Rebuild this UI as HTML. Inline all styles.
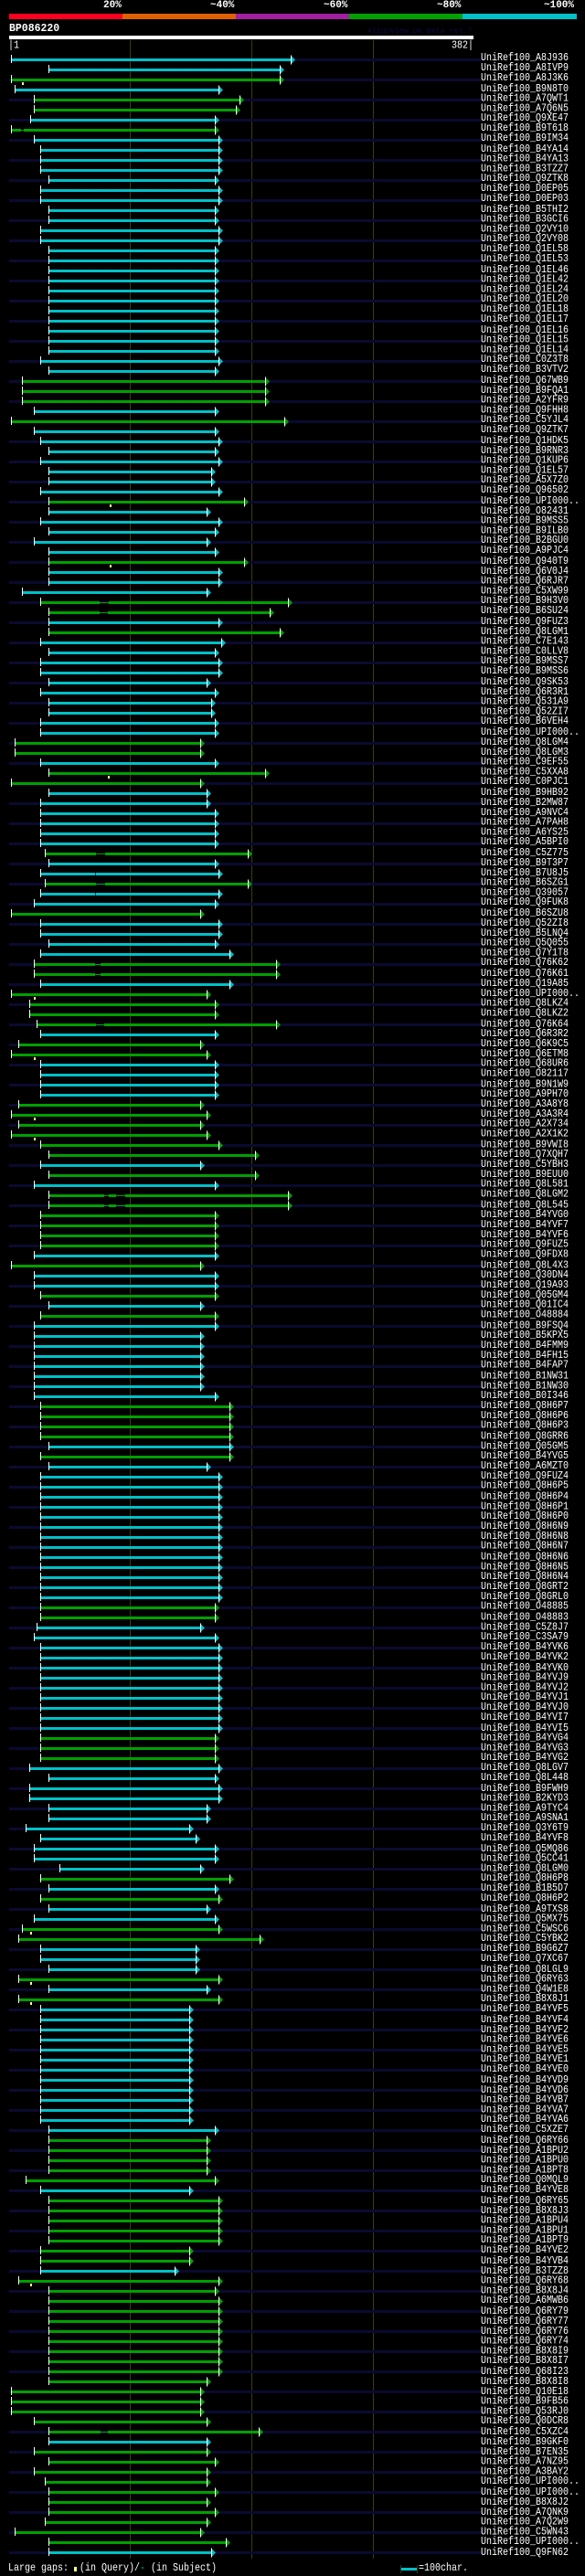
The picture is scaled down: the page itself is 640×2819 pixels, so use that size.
<!DOCTYPE html>
<html><head><meta charset="utf-8"><style>
html,body{margin:0;padding:0;background:#000;}
body{width:640px;height:2819px;position:relative;overflow:hidden;font-family:"Liberation Mono",monospace;color:#fff;}
.t{position:absolute;white-space:pre;}
.h{font-weight:bold;font-size:11px;line-height:12px;}
#labels{position:absolute;left:526px;top:59.3px;font-size:10px;line-height:9.1667px;white-space:pre;transform:scaleY(1.2);transform-origin:0 0;color:#fff;}
svg{position:absolute;left:0;top:0;}
</style></head><body>
<svg id="g" width="640" height="2819" xmlns="http://www.w3.org/2000/svg">
<rect x="10" y="15" width="124" height="6" fill="#ff0020"/>
<rect x="134" y="15" width="124" height="6" fill="#e06000"/>
<rect x="258" y="15" width="124" height="6" fill="#a020a0"/>
<rect x="382" y="15" width="124" height="6" fill="#00a000"/>
<rect x="506" y="15" width="125" height="6" fill="#00c0c8"/>
<rect x="10" y="39" width="508" height="4" fill="#fff"/>
<rect x="142" y="44" width="1" height="2756" fill="#3c3c10"/>
<rect x="275" y="44" width="1" height="2756" fill="#3c3c10"/>
<rect x="408" y="44" width="1" height="2756" fill="#3c3c10"/>
<rect x="438" y="2810" width="18" height="3" fill="#00c0c8"/>
<rect x="438" y="2807" width="1" height="9" fill="#2a3a10"/>
<rect x="456" y="2807" width="1" height="9" fill="#2a3a10"/>
<rect x="81" y="2809" width="3" height="5" fill="#ffff80"/>
</svg>
<div class="t h" style="left:113px;top:0px;">20%</div>
<div class="t h" style="left:230px;top:0px;">~40%</div>
<div class="t h" style="left:354px;top:0px;">~60%</div>
<div class="t h" style="left:478px;top:0px;">~80%</div>
<div class="t h" style="left:595px;top:0px;">~100%</div>
<div class="t h" style="left:10px;top:26px;font-size:11.5px;">BP086220</div>
<div class="t" style="left:402px;top:30px;font-size:8.3px;color:#0c0c44;">AlignView.pm Beta rel.7</div>
<div class="t" style="left:9px;top:44px;font-size:10px;transform:scaleY(1.2);transform-origin:0 0;">|1</div>
<div class="t" style="left:494px;top:44px;font-size:10px;transform:scaleY(1.2);transform-origin:0 0;">382|</div>
<div class="t" style="left:9px;top:2805px;font-size:10px;transform:scaleY(1.15);transform-origin:0 0;">Large gaps: &nbsp;(in Query)/<span style="color:#00c0c8">-</span> (in Subject)</div>
<div class="t" style="left:458px;top:2805px;font-size:10px;transform:scaleY(1.15);transform-origin:0 0;">=100char.</div>
<div id="labels">UniRef100_A8J936
UniRef100_A8IVP9
UniRef100_A8J3K6
UniRef100_B9N8T0
UniRef100_A7QWT1
UniRef100_A7Q6N5
UniRef100_Q9XE47
UniRef100_B9T618
UniRef100_B9IM34
UniRef100_B4YA14
UniRef100_B4YA13
UniRef100_B3TZZ7
UniRef100_Q9ZTK8
UniRef100_D0EP05
UniRef100_D0EP03
UniRef100_B5THI2
UniRef100_B3GCI6
UniRef100_Q2VY10
UniRef100_Q2VY08
UniRef100_Q1EL58
UniRef100_Q1EL53
UniRef100_Q1EL46
UniRef100_Q1EL42
UniRef100_Q1EL24
UniRef100_Q1EL20
UniRef100_Q1EL18
UniRef100_Q1EL17
UniRef100_Q1EL16
UniRef100_Q1EL15
UniRef100_Q1EL14
UniRef100_C0Z3T8
UniRef100_B3VTV2
UniRef100_Q67WB9
UniRef100_B9FQA1
UniRef100_A2YFR9
UniRef100_Q9FHH8
UniRef100_C5YJL4
UniRef100_Q9ZTK7
UniRef100_Q1HDK5
UniRef100_B9RNR3
UniRef100_Q1KUP6
UniRef100_Q1EL57
UniRef100_A5X7Z0
UniRef100_Q96502
UniRef100_UPI000..
UniRef100_O82431
UniRef100_B9MSS5
UniRef100_B9ILB0
UniRef100_B2BGU0
UniRef100_A9PJC4
UniRef100_Q940T9
UniRef100_Q6V0J4
UniRef100_Q6RJR7
UniRef100_C5XW99
UniRef100_B9H3V0
UniRef100_B6SU24
UniRef100_Q9FUZ3
UniRef100_Q8LGM1
UniRef100_C7E143
UniRef100_C0LLV8
UniRef100_B9MSS7
UniRef100_B9MSS6
UniRef100_Q9SK53
UniRef100_Q6R3R1
UniRef100_Q531A9
UniRef100_Q52ZI7
UniRef100_B6VEH4
UniRef100_UPI000..
UniRef100_Q8LGM4
UniRef100_Q8LGM3
UniRef100_C9EF55
UniRef100_C5XXA8
UniRef100_C0PJC1
UniRef100_B9HB92
UniRef100_B2MW87
UniRef100_A9NVC4
UniRef100_A7PAH8
UniRef100_A6YS25
UniRef100_A5BPI0
UniRef100_C5Z775
UniRef100_B9T3P7
UniRef100_B7U8J5
UniRef100_B6SZG1
UniRef100_Q39057
UniRef100_Q9FUK8
UniRef100_B6SZU8
UniRef100_Q52ZI8
UniRef100_B5LNQ4
UniRef100_Q5Q055
UniRef100_Q7Y1T8
UniRef100_Q76K62
UniRef100_Q76K61
UniRef100_Q19A85
UniRef100_UPI000..
UniRef100_Q8LKZ4
UniRef100_Q8LKZ2
UniRef100_Q76K64
UniRef100_Q6R3R2
UniRef100_Q6K9C5
UniRef100_Q6ETM8
UniRef100_Q68UR6
UniRef100_O82117
UniRef100_B9N1W9
UniRef100_A9PH70
UniRef100_A3A8Y8
UniRef100_A3A3R4
UniRef100_A2X734
UniRef100_A2X1K2
UniRef100_B9VWI8
UniRef100_Q7XQH7
UniRef100_C5YBH3
UniRef100_B9EUU0
UniRef100_Q8L581
UniRef100_Q8LGM2
UniRef100_Q8L545
UniRef100_B4YVG0
UniRef100_B4YVF7
UniRef100_B4YVF6
UniRef100_Q9FUZ5
UniRef100_Q9FDX8
UniRef100_Q8L4X3
UniRef100_Q30DN4
UniRef100_Q19A93
UniRef100_Q05GM4
UniRef100_Q01IC4
UniRef100_O48884
UniRef100_B9FSQ4
UniRef100_B5KPX5
UniRef100_B4FMM9
UniRef100_B4FH15
UniRef100_B4FAP7
UniRef100_B1NW31
UniRef100_B1NW30
UniRef100_B0I346
UniRef100_Q8H6P7
UniRef100_Q8H6P6
UniRef100_Q8H6P3
UniRef100_Q8GRR6
UniRef100_Q05GM5
UniRef100_B4YVG5
UniRef100_A6MZT0
UniRef100_Q9FUZ4
UniRef100_Q8H6P5
UniRef100_Q8H6P4
UniRef100_Q8H6P1
UniRef100_Q8H6P0
UniRef100_Q8H6N9
UniRef100_Q8H6N8
UniRef100_Q8H6N7
UniRef100_Q8H6N6
UniRef100_Q8H6N5
UniRef100_Q8H6N4
UniRef100_Q8GRT2
UniRef100_Q8GRL0
UniRef100_O48885
UniRef100_O48883
UniRef100_C5Z8J7
UniRef100_C3SA79
UniRef100_B4YVK6
UniRef100_B4YVK2
UniRef100_B4YVK0
UniRef100_B4YVJ9
UniRef100_B4YVJ2
UniRef100_B4YVJ1
UniRef100_B4YVJ0
UniRef100_B4YVI7
UniRef100_B4YVI5
UniRef100_B4YVG4
UniRef100_B4YVG3
UniRef100_B4YVG2
UniRef100_Q8LGV7
UniRef100_Q8L448
UniRef100_B9FWH9
UniRef100_B2KYD3
UniRef100_A9TYC4
UniRef100_A9SNA1
UniRef100_Q3Y6T9
UniRef100_B4YVF8
UniRef100_Q5MQ86
UniRef100_Q5CC41
UniRef100_Q8LGM0
UniRef100_Q8H6P8
UniRef100_B1B5D7
UniRef100_Q8H6P2
UniRef100_A9TXS8
UniRef100_Q5MX75
UniRef100_C5WSC6
UniRef100_C5YBK2
UniRef100_B9G6Z7
UniRef100_Q7XC67
UniRef100_Q8LGL9
UniRef100_Q6RY63
UniRef100_Q4W1E8
UniRef100_B8X8J1
UniRef100_B4YVF5
UniRef100_B4YVF4
UniRef100_B4YVF2
UniRef100_B4YVE6
UniRef100_B4YVE5
UniRef100_B4YVE1
UniRef100_B4YVE0
UniRef100_B4YVD9
UniRef100_B4YVD6
UniRef100_B4YVB7
UniRef100_B4YVA7
UniRef100_B4YVA6
UniRef100_C5XZE7
UniRef100_Q6RY66
UniRef100_A1BPU2
UniRef100_A1BPU0
UniRef100_A1BPT8
UniRef100_Q0MQL9
UniRef100_B4YVE8
UniRef100_Q6RY65
UniRef100_B8X8J3
UniRef100_A1BPU4
UniRef100_A1BPU1
UniRef100_A1BPT9
UniRef100_B4YVE2
UniRef100_B4YVB4
UniRef100_B3TZZ8
UniRef100_Q6RY68
UniRef100_B8X8J4
UniRef100_A6MWB6
UniRef100_Q6RY79
UniRef100_Q6RY77
UniRef100_Q6RY76
UniRef100_Q6RY74
UniRef100_B8X8I9
UniRef100_B8X8I7
UniRef100_Q68I23
UniRef100_B8X8I8
UniRef100_Q10E18
UniRef100_B9FB56
UniRef100_Q53RJ0
UniRef100_Q0DCR8
UniRef100_C5XZC4
UniRef100_B9GKF0
UniRef100_B7EN35
UniRef100_A7NZ95
UniRef100_A3BAY2
UniRef100_UPI000..
UniRef100_UPI000..
UniRef100_B8X8J2
UniRef100_A7QNK9
UniRef100_A7Q2W9
UniRef100_C5WN43
UniRef100_UPI000..
UniRef100_Q9FN62</div>
<script>
(function(){
var D="10 264 c;43 254 c;10 254 g;13 199 c;30 218 g;30 215 g;27 196 c;10 196 g;30 199 c;36 199 c*3;43 196 c;36 199 c*2;43 196 c*2;36 199 c*2;43 196 c*11;36 199 c;43 196 c;20 241 g*3;30 196 c;10 258 g;30 196 c;36 199 c;43 196 c;36 199 c;43 193 c*2;36 199 c;43 222 g;43 189 c;36 199 c;43 196 c;30 189 c;43 196 c;43 222 g;43 199 c*2;20 189 c;36 261 g;43 245 g;43 199 c;43 254 g;36 202 c;43 196 c;36 199 c*2;43 189 c;36 196 c;43 193 c*2;36 196 c*2;13 183 g*2;36 196 c;43 241 g;10 183 g;43 189 c;36 189 c;36 196 c*4;40 225 g;43 196 c;36 199 c;40 225 g;36 199 c;30 196 c;10 183 g;36 199 c*2;43 196 c;36 209 c;30 251 g*2;36 209 c;10 189 g;26 196 g*2;33 251 g;36 196 c;16 183 g;10 189 g;36 196 c*4;16 183 g;10 189 g;16 183 g;10 189 g;36 199 g;43 232 g;36 183 c;43 232 g;30 196 c;43 261 g*2;36 196 g*4;30 196 c;10 183 g;30 196 c*2;36 196 g;43 183 c;36 196 g;30 196 c;30 183 c*6;30 196 c;36 209 g*4;43 209 c;36 209 g;43 189 c;36 199 c*13;36 196 g*2;33 183 c;30 196 c;36 199 c*9;36 196 g*3;26 199 c;43 196 c;26 199 c*2;43 189 c*2;23 173 c;36 179 c;30 196 c*2;53 183 c;36 209 g;43 196 c;36 199 g;43 189 c;30 196 c;20 199 g;16 236 g;36 179 c*2;43 179 c;16 199 g;43 189 c;16 199 g;36 173 c*12;43 196 c;43 189 g*4;23 196 g;36 173 c;43 199 g*5;36 173 g*2;36 160 c;16 199 g;43 196 g;43 199 g*8;43 189 g;10 183 g*3;30 189 g;43 235 g;43 189 c;30 189 g;43 196 g;30 189 g;40 189 g;43 196 g;43 189 g;43 196 g;40 189 g;13 183 g;43 206 g;43 193 c";
var rows=[];
D.split(";").forEach(function(s){var p=s.split("*"),n=p[1]?+p[1]:1,q=p[0].split(" ");for(var i=0;i<n;i++)rows.push([+q[0],+q[1],q[2]]);});
var gaps={8:[[19,21]],55:[[89,97]],56:[[89,96]],80:[[86,94]],83:[[86,94]],82:[[85,86]],84:[[85,86]],91:[[85,90]],92:[[85,90]],97:[[86,93]],114:[[93,97],[104,112]],115:[[93,97],[104,112]],237:[[90,96]]};
var ym={3:20,45:98,51:98,72:96,94:30,100:30,106:30,108:30,187:27,192:27,194:27,222:27};
var K=1.2245,ns="http://www.w3.org/2000/svg",svg=document.getElementById("g");
function el(t,a){var e=document.createElementNS(ns,t);for(var k in a)e.setAttribute(k,a[k]);svg.appendChild(e);return e;}
var tr=[],fg=[];
rows.forEach(function(r,i){
 var n=i+1,cy=65+11*i,x0=Math.round(r[0]*K),x1=Math.round(r[1]*K),col=r[2]=="c"?"#00c0c8":"#00a000";
 if(n%2==1)el("rect",{x:10,y:cy-1,width:517,height:3,fill:"#0a0a30"});
 el("rect",{x:x0,y:cy-1,width:x1-5-x0,height:3,fill:col});
 if(gaps[n])gaps[n].forEach(function(g){var a=Math.round(g[0]*K),b=Math.round(g[1]*K);el("rect",{x:a,y:cy-1,width:b-a,height:3,fill:n%2?"#0a0a30":"#000"});el("rect",{x:a,y:cy,width:b-a,height:1,fill:col});});
 el("rect",{x:x0,y:cy-5,width:1,height:9,fill:"#fff"});
 el("polygon",{points:(x1-5)+","+(cy-4.5)+" "+x1+","+(cy+0.5)+" "+(x1-5)+","+(cy+5.5),fill:col});
 el("rect",{x:x1-5,y:cy-4.5,width:1,height:10,fill:"#fff"});
 if(ym[n])el("rect",{x:Math.round(ym[n]*K),y:cy+3,width:2,height:3,fill:"#ffff80"});
});
})();
</script>
</body></html>
